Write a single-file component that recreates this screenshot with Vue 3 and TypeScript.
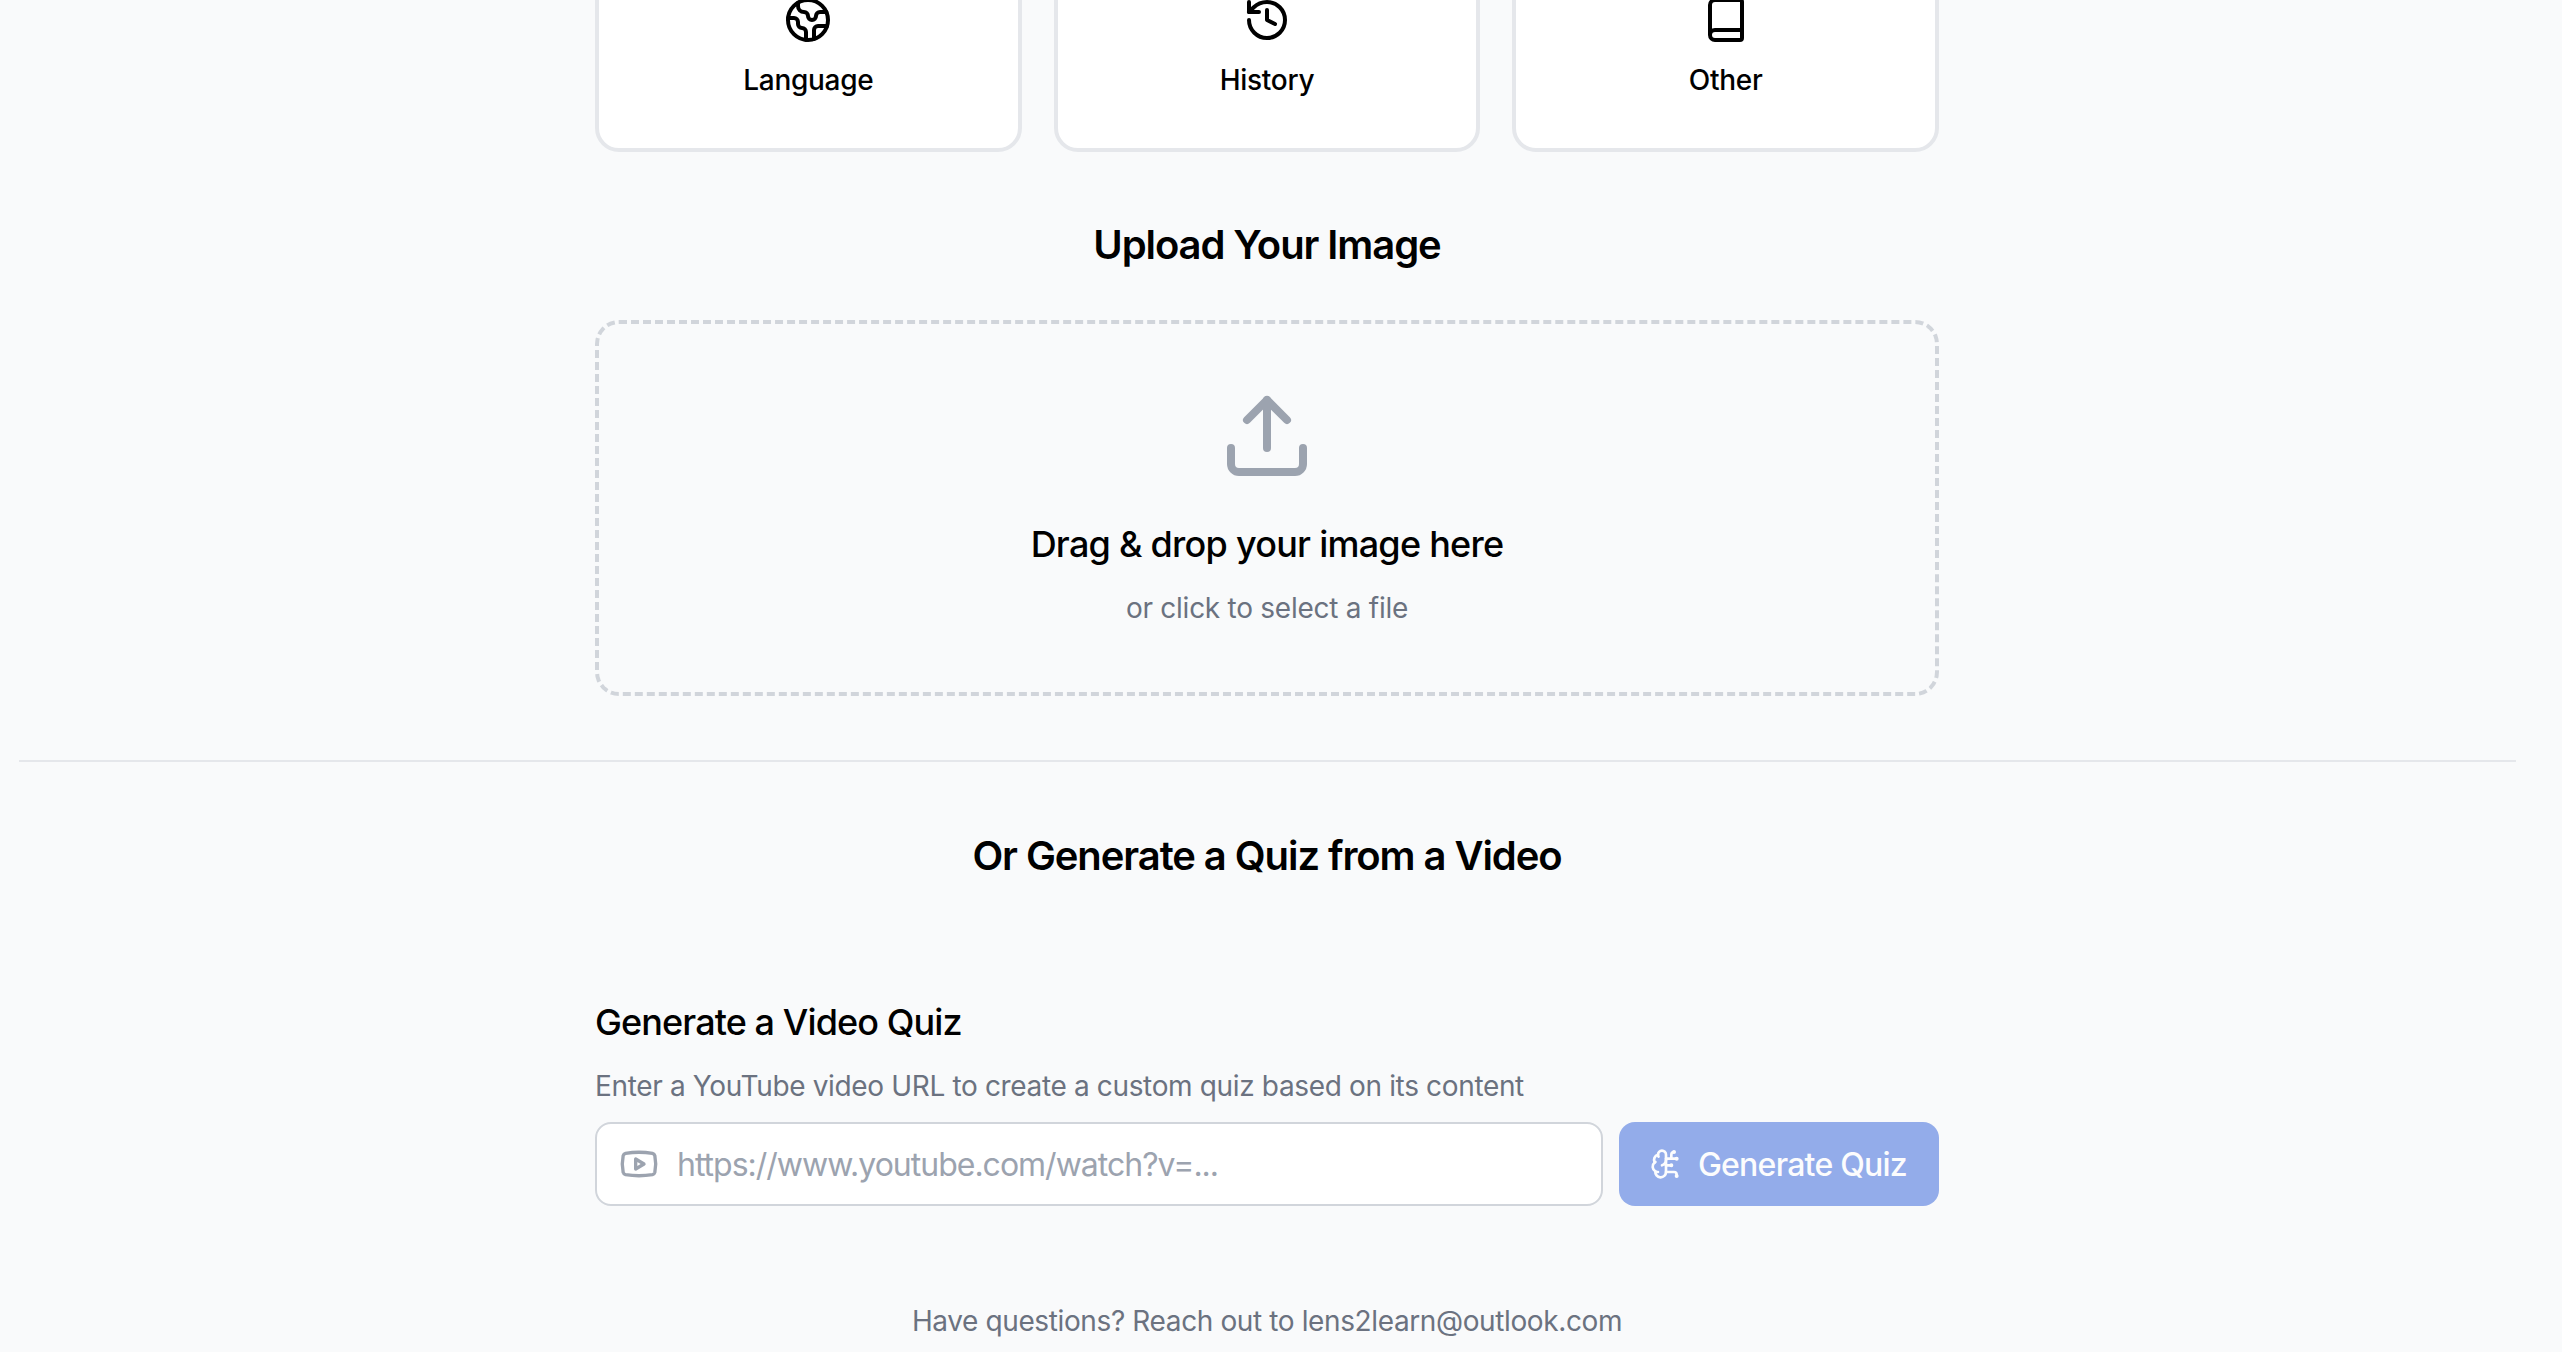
<script setup lang="ts">
const subjects = ['Language', 'History', 'Other']
</script>

<template>
  <div class="page">
    <main class="content">
      <div class="column">
        <div class="subjects">
          <div v-for="name in subjects" :key="name" class="subject">
            <svg v-if="name === 'Language'" class="icon48" viewBox="0 0 24 24">
              <path d="M21.54 15H17a2 2 0 0 0-2 2v4.54" />
              <path d="M7 3.34V5a3 3 0 0 0 3 3a2 2 0 0 1 2 2c0 1.1.9 2 2 2a2 2 0 0 0 2-2c0-1.1.9-2 2-2h3.17" />
              <path d="M11 21.95V18a2 2 0 0 0-2-2a2 2 0 0 1-2-2v-1a2 2 0 0 0-2-2H2.05" />
              <circle cx="12" cy="12" r="10" />
            </svg>
            <svg v-else-if="name === 'History'" class="icon48" viewBox="0 0 24 24">
              <path d="M3 12a9 9 0 1 0 9-9 9.75 9.75 0 0 0-6.74 2.74L3 8" />
              <path d="M3 3v5h5" />
              <path d="M12 7v5l4 2" />
            </svg>
            <svg v-else class="icon48" viewBox="0 0 24 24">
              <path d="M4 19.5v-15A2.5 2.5 0 0 1 6.5 2H19a1 1 0 0 1 1 1v18a1 1 0 0 1-1 1H6.5a1 1 0 0 1 0-5H20" />
            </svg>
            <span class="subject-name">{{ name }}</span>
          </div>
        </div>

        <h2 class="title upload-title">Upload Your Image</h2>

        <div class="dropzone">
          <svg class="upload-icon" viewBox="0 0 24 24">
            <path d="M21 15v4a2 2 0 0 1-2 2H5a2 2 0 0 1-2-2v-4" />
            <polyline points="17 8 12 3 7 8" />
            <line x1="12" x2="12" y1="3" y2="15" />
          </svg>
          <p class="drop-main">Drag &amp; drop your image here</p>
          <p class="drop-sub">or click to select a file</p>
        </div>
      </div>

      <hr class="divider" />

      <div class="column">
        <h2 class="title">Or Generate a Quiz from a Video</h2>

        <section class="video">
          <h3 class="video-title">Generate a Video Quiz</h3>
          <p class="video-sub">Enter a YouTube video URL to create a custom quiz based on its content</p>
          <div class="video-form">
            <div class="url-field">
              <svg class="yt-icon" viewBox="0 0 24 24">
                <path d="M2.5 17a24.12 24.12 0 0 1 0-10 2 2 0 0 1 1.4-1.4 49.56 49.56 0 0 1 16.2 0A2 2 0 0 1 21.5 7a24.12 24.12 0 0 1 0 10 2 2 0 0 1-1.4 1.4 49.55 49.55 0 0 1-16.2 0A2 2 0 0 1 2.5 17" />
                <path d="m10 15 5-3-5-3z" />
              </svg>
              <input class="url-input" type="text" placeholder="https://www.youtube.com/watch?v=..." />
            </div>
            <button class="generate" type="button" disabled>
              <svg class="brain-icon" viewBox="0 0 24 24">
                <path d="M12 5a3 3 0 1 0-5.997.125 4 4 0 0 0-2.526 5.77 4 4 0 0 0 .556 6.588A4 4 0 1 0 12 18Z" />
                <path d="M9 13a4.5 4.5 0 0 0 3-4" />
                <path d="M6.003 5.125A3 3 0 0 0 6.401 6.5" />
                <path d="M3.477 10.896a4 4 0 0 1 .585-.396" />
                <path d="M6 18a4 4 0 0 1-1.967-.516" />
                <path d="M12 13h4" />
                <path d="M12 18h6a2 2 0 0 1 2 2v1" />
                <path d="M12 8h8" />
                <path d="M16 8V5a2 2 0 0 1 2-2" />
                <circle cx="16" cy="13" r=".5" />
                <circle cx="18" cy="3" r=".5" />
                <circle cx="20" cy="21" r=".5" />
                <circle cx="20" cy="8" r=".5" />
              </svg>
              Generate Quiz
            </button>
          </div>
        </section>

        <p class="contact">Have questions? Reach out to lens2learn@outlook.com</p>
      </div>
    </main>
  </div>
</template>

<style>
html,
body {
  margin: 0;
  background: #f9fafb;
}
</style>

<style scoped>
.page {
  height: 100vh;
  overflow: hidden;
  background: #f9fafb;
  color: #000;
  font-family: Inter, "Liberation Sans", sans-serif;
}
.content {
  margin-top: -56px;
  padding: 0 47px 0 19px;
}
.column {
  width: 1344px;
  margin: 0 auto;
}
.subjects {
  display: grid;
  grid-template-columns: repeat(3, 1fr);
  gap: 32px;
}
.subject {
  display: flex;
  flex-direction: column;
  align-items: center;
  gap: 16px;
  padding: 48px;
  background: #fff;
  border: 4px solid #e5e7eb;
  border-radius: 24px;
}
svg {
  fill: none;
  stroke: currentColor;
  stroke-linecap: round;
  stroke-linejoin: round;
  stroke-width: 2;
  flex-shrink: 0;
}
.icon48 {
  width: 48px;
  height: 48px;
}
.subject-name {
  font-size: 28px;
  line-height: 40px;
  font-weight: 500;
  letter-spacing: -0.3px;
}
.title {
  margin: 0;
  font-size: 40px;
  line-height: 56px;
  font-weight: 600;
  letter-spacing: -1.08px;
  text-align: center;
}
.upload-title {
  margin: 65px 0 47px;
}
.dropzone {
  display: flex;
  flex-direction: column;
  align-items: center;
  padding: 64px;
  border: 4px dashed #d1d5db;
  border-radius: 24px;
}
.upload-icon {
  width: 96px;
  height: 96px;
  color: #9ca3af;
}
.drop-main {
  margin: 32px 0 0;
  font-size: 36px;
  line-height: 56px;
  font-weight: 500;
  letter-spacing: -0.75px;
}
.drop-sub {
  margin: 16px 0 0;
  font-size: 28px;
  line-height: 40px;
  letter-spacing: -0.26px;
  color: #6b7280;
}
.divider {
  height: 2px;
  margin: 64px -1px 66px 0;
  border: 0;
  background: #e5e7eb;
}
.video {
  margin-top: 110px;
}
.video-title {
  margin: 0;
  font-size: 36px;
  line-height: 56px;
  font-weight: 500;
  letter-spacing: -0.9px;
}
.video-sub {
  margin: 16px 0 0;
  font-size: 28px;
  line-height: 40px;
  letter-spacing: -0.35px;
  color: #6b7280;
}
.video-form {
  display: flex;
  gap: 16px;
  margin-top: 16px;
}
.url-field {
  flex: 1;
  display: flex;
  align-items: center;
  gap: 18px;
  height: 84px;
  box-sizing: border-box;
  padding: 0 24px 0 22px;
  background: #fff;
  border: 2px solid #d1d5db;
  border-radius: 16px;
}
.yt-icon {
  width: 40px;
  height: 40px;
  color: #9ca3af;
}
.url-input {
  flex: 1;
  min-width: 0;
  padding: 0;
  border: 0;
  outline: 0;
  background: transparent;
  font: inherit;
  font-size: 32px;
  letter-spacing: -1px;
  color: #111827;
}
.url-input::placeholder {
  color: #9ca3af;
  opacity: 1;
}
.generate {
  display: flex;
  align-items: center;
  gap: 16px;
  height: 84px;
  padding: 0 32px 0 31px;
  background: #2f60db;
  color: #fff;
  border: 0;
  border-radius: 16px;
  font: inherit;
  font-size: 32px;
  font-weight: 500;
  letter-spacing: -0.75px;
  opacity: 0.5;
}
.brain-icon {
  width: 32px;
  height: 32px;
}
.contact {
  margin: 95px 0 0;
  font-size: 28px;
  line-height: 40px;
  letter-spacing: -0.38px;
  color: #6b7280;
  text-align: center;
}
</style>
